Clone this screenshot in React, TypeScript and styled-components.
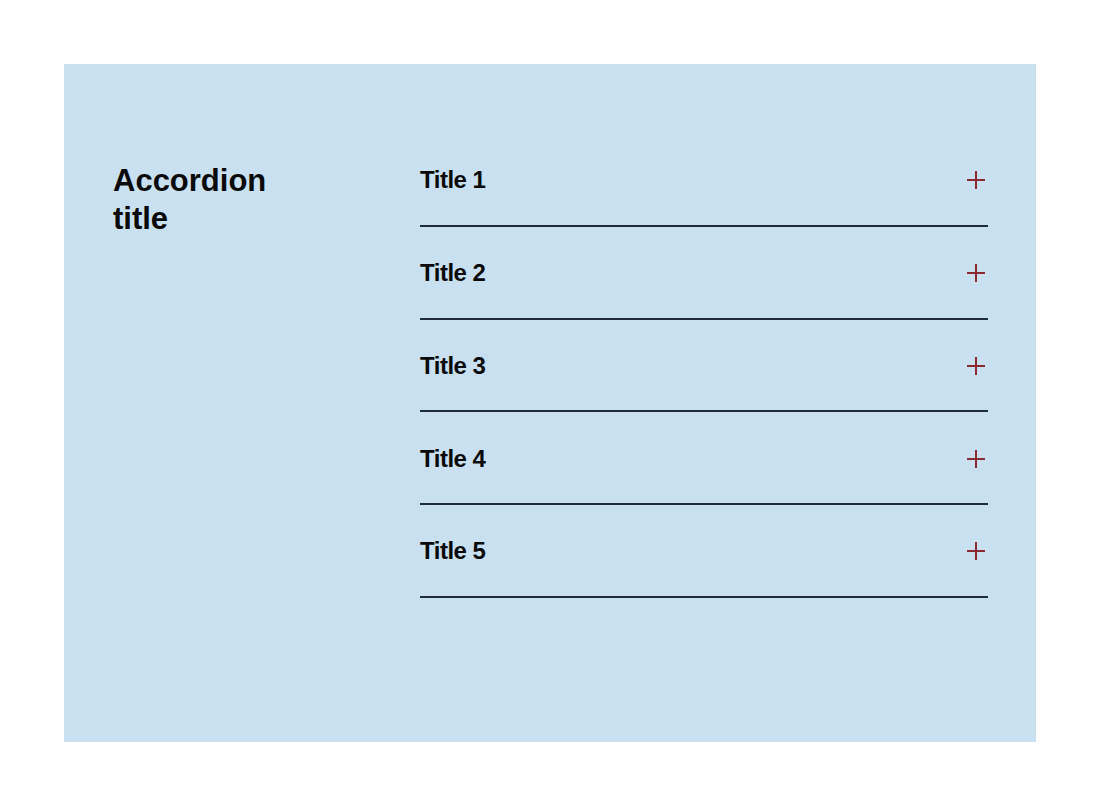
import React from "react";
import styled, { createGlobalStyle } from "styled-components";

const Global = createGlobalStyle`
  html, body { margin: 0; padding: 0; background: #ffffff; }
  body { font-family: "Liberation Sans", Arial, sans-serif; }
`;

const Page = styled.div`
  padding: 64px;
`;

const Panel = styled.section`
  box-sizing: border-box;
  width: 972px;
  height: 678px;
  background: #c8e0ef;
  padding: 70px 48px 0 49px;
  display: grid;
  grid-template-columns: 307px 1fr;
  align-items: start;
`;

const Heading = styled.h2`
  margin: 28px 0 0 0;
  font-family: "Liberation Sans", Arial, sans-serif;
  font-weight: 700;
  font-size: 31px;
  line-height: 38px;
  color: #0a0a0a;
`;

const List = styled.div`
  display: flex;
  flex-direction: column;
`;

const Item = styled.button`
  all: unset;
  box-sizing: border-box;
  display: flex;
  align-items: center;
  justify-content: space-between;
  height: 92.75px;
  padding: 2px 2px 0 0;
  border-bottom: 2px solid #1d2b3a;
  cursor: pointer;
`;

const ItemTitle = styled.span`
  font-family: "Liberation Sans", Arial, sans-serif;
  font-weight: 700;
  font-size: 24px;
  line-height: 24px;
  color: #0a0a0a;
  letter-spacing: -0.5px;
`;

const Plus = () => (
  <svg width="20" height="20" viewBox="0 0 20 20" aria-hidden="true">
    <path d="M10 1v18M1 10h18" stroke="#8a2a2e" strokeWidth="2" fill="none" />
  </svg>
);

export default function App() {
  const items = ["Title 1", "Title 2", "Title 3", "Title 4", "Title 5"];
  return (
    <Page>
      <Global />
      <Panel>
        <Heading>
          Accordion
          <br />
          title
        </Heading>
        <List>
          {items.map((t) => (
            <Item key={t}>
              <ItemTitle>{t}</ItemTitle>
              <Plus />
            </Item>
          ))}
        </List>
      </Panel>
    </Page>
  );
}
